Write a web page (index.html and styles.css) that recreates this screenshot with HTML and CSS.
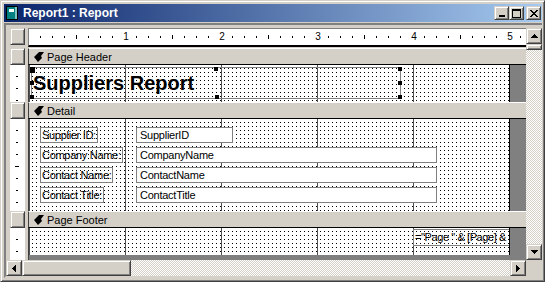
FILE: index.html
```html
<!DOCTYPE html>
<html lang="en">
<head>
    <meta charset="UTF-8">
    <title>Report1 : Report</title>
    <link rel="stylesheet" href="styles.css">
</head>
<body>
<div class="window">
    <div class="titlebar">
        <svg class="app-icon" width="16" height="16" viewBox="0 0 16 16">
            <rect x="1.5" y="1.5" width="11" height="13" fill="#008080" stroke="#000"/>
            <rect x="10" y="2" width="2" height="12" fill="#7fc4c4"/>
            <rect x="4" y="4" width="5" height="3" fill="#fff"/>
        </svg>
        <span class="title">Report1 : Report</span>
        <div class="caption-buttons">
            <div class="cap-btn raised">
                <svg width="8" height="8" viewBox="0 0 8 8" shape-rendering="crispEdges"><rect x="1" y="6" width="6" height="2"/></svg>
            </div>
            <div class="cap-btn raised">
                <svg width="9" height="9" viewBox="0 0 9 9" shape-rendering="crispEdges"><path d="M0 0h9v9H0zM1 2v6h7V2z" fill-rule="evenodd"/></svg>
            </div>
            <div class="cap-btn raised close">
                <svg width="8" height="7" viewBox="0 0 8 7" shape-rendering="crispEdges"><path d="M0 0h2v1h1v1h2V1h1V0h2v1H7v1H6v1H5v1h1v1h1v1h1v1H6V6H5V5H3v1H2v1H0V6h1V5h1V4h1V3H2V2H1V1H0z"/></svg>
            </div>
        </div>
    </div>

    <div class="client">
        <div class="pane">
            <div class="design">
                <!-- vodorovne pravitko -->
                <div class="row ruler-row">
                    <div class="corner-box raised"></div>
                    <div class="ruler">
                        <div class="inch"><span>1</span></div>
                        <div class="inch"><span>2</span></div>
                        <div class="inch"><span>3</span></div>
                        <div class="inch"><span>4</span></div>
                        <div class="inch"><span>5</span></div>
                    </div>
                </div>

                <!-- Page Header -->
                <div class="row bar-row">
                    <div class="selector raised"></div>
                    <div class="band bar">
                        <svg class="bar-icon" width="10" height="10" viewBox="0 0 10 10"><path d="M0 5L5 0H10L7 4L8 6L4 10Z"/></svg>
                        Page Header
                    </div>
                </div>
                <div class="row sec-header">
                    <div class="vruler"></div>
                    <div class="band section">
                        <div class="canvas canvas-header">
                            <div class="title-label">
                                Suppliers Report
                                <span class="handle h-tl"></span>
                                <span class="handle h-tm"></span>
                                <span class="handle h-tr"></span>
                                <span class="handle h-ml"></span>
                                <span class="handle h-mr"></span>
                                <span class="handle h-bl"></span>
                                <span class="handle h-bm"></span>
                                <span class="handle h-br"></span>
                            </div>
                        </div>
                        <div class="offpage"></div>
                    </div>
                </div>

                <!-- Detail -->
                <div class="row bar-row">
                    <div class="selector raised"></div>
                    <div class="band bar">
                        <svg class="bar-icon" width="10" height="10" viewBox="0 0 10 10"><path d="M0 5L5 0H10L7 4L8 6L4 10Z"/></svg>
                        Detail
                    </div>
                </div>
                <div class="row sec-detail">
                    <div class="vruler"></div>
                    <div class="band section">
                        <div class="canvas canvas-detail">
                            <div class="field-row">
                                <div class="lbl-cell"><span class="lbl">Supplier ID:</span></div>
                                <div class="txt short">SupplierID</div>
                            </div>
                            <div class="field-row">
                                <div class="lbl-cell"><span class="lbl">Company Name:</span></div>
                                <div class="txt long">CompanyName</div>
                            </div>
                            <div class="field-row">
                                <div class="lbl-cell"><span class="lbl">Contact Name:</span></div>
                                <div class="txt long">ContactName</div>
                            </div>
                            <div class="field-row">
                                <div class="lbl-cell"><span class="lbl">Contact Title:</span></div>
                                <div class="txt long">ContactTitle</div>
                            </div>
                        </div>
                        <div class="offpage"></div>
                    </div>
                </div>

                <!-- Page Footer -->
                <div class="row bar-row">
                    <div class="selector raised"></div>
                    <div class="band bar">
                        <svg class="bar-icon" width="10" height="10" viewBox="0 0 10 10"><path d="M0 5L5 0H10L7 4L8 6L4 10Z"/></svg>
                        Page Footer
                    </div>
                </div>
                <div class="row sec-footer">
                    <div class="vruler"></div>
                    <div class="band section">
                        <div class="canvas canvas-footer">
                            <div class="txt page-no">="Page " &amp; [Page] &amp;</div>
                        </div>
                        <div class="offpage"></div>
                    </div>
                </div>

                <div class="row sec-rest">
                    <div class="vruler"></div>
                    <div class="band offpage"></div>
                </div>
            </div>

            <div class="vscroll">
                <div class="sbtn raised">
                    <svg width="7" height="4" viewBox="0 0 7 4" shape-rendering="crispEdges"><path d="M3 0h1v1h1v1h1v1h1v1H0V3h1V2h1V1h1z"/></svg>
                </div>
                <div class="vthumb raised"></div>
                <div class="track"></div>
                <div class="sbtn raised">
                    <svg width="7" height="4" viewBox="0 0 7 4" shape-rendering="crispEdges"><path d="M0 0h7v1H6v1H5v1H4v1H3V3H2V2H1V1H0z"/></svg>
                </div>
            </div>
        </div>

        <div class="hscroll-row">
            <div class="hscroll">
                <div class="sbtn raised">
                    <svg width="4" height="7" viewBox="0 0 4 7" shape-rendering="crispEdges"><path d="M3 0h1v7H3V6H2V5H1V4H0V3h1V2h1V1h1z"/></svg>
                </div>
                <div class="hthumb raised"></div>
                <div class="track"></div>
                <div class="sbtn raised">
                    <svg width="4" height="7" viewBox="0 0 4 7" shape-rendering="crispEdges"><path d="M0 0h1v1h1v1h1v1h1v1H3v1H2v1H1v1H0z"/></svg>
                </div>
            </div>
            <div class="sizebox"></div>
        </div>
    </div>
</div>
</body>
</html>
```

FILE: styles.css
```css
* {
    box-sizing: border-box;
}
body {
    margin: 0;
    background: #d4d0c8;
    font-family: "Liberation Sans", Arial, sans-serif;
    font-size: 11px;
    color: #000;
}
.window {
    width: 545px;
    height: 282px;
    display: flex;
    flex-direction: column;
    padding: 3px 2px 3px 3px;
    background: #d4d0c8;
    border: 1px solid;
    border-color: #d4d0c8 #404040 #404040 #d4d0c8;
    box-shadow: inset 1px 1px #fff, inset -1px -1px #808080;
    overflow: hidden;
}
.raised {
    background: #d4d0c8;
    border: 1px solid;
    border-color: #d4d0c8 #404040 #404040 #d4d0c8;
    box-shadow: inset 1px 1px #fff, inset -1px -1px #808080;
}

/* titulek okna */
.titlebar {
    flex: none;
    height: 18px;
    display: flex;
    align-items: center;
    padding: 0 1px;
    background: linear-gradient(to right, #0a246a, #a6caf0);
    color: #fff;
}
.app-icon {
    flex: none;
    margin-right: 2px;
}
.title {
    font-weight: bold;
    font-size: 12px;
    white-space: nowrap;
}
.caption-buttons {
    margin-left: auto;
    display: flex;
}
.cap-btn {
    width: 15px;
    height: 14px;
    display: flex;
    align-items: center;
    justify-content: center;
}
.cap-btn.close {
    margin-left: 2px;
}

/* klientska oblast */
.client {
    flex: 1;
    margin-top: 1px;
    border-style: solid;
    border-width: 2px 0 2px 2px;
    border-color: #808080 transparent #d4d0c8 #808080;
    padding-top: 3px;
    display: flex;
    flex-direction: column;
}
.pane {
    height: 232px;
    display: flex;
}
.design {
    width: 520px;
    flex: none;
    padding-left: 4px;
    display: flex;
    flex-direction: column;
}
.row {
    display: flex;
    flex: none;
}

/* pravitka */
.ruler-row {
    height: 19px;
    margin-bottom: 1px;
}
.corner-box {
    width: 15px;
    height: 17px;
    flex: none;
}
.ruler {
    flex: 1;
    margin-left: 3px;
    display: flex;
    border-top: 1px solid #808080;
    border-left: 1px solid #808080;
    border-bottom: 2px solid #000;
    background-color: #fff;
    background-image: repeating-linear-gradient(to right, transparent 0 11px, #000 11px 12px);
    background-size: 100% 2px;
    background-position: 0 7px;
    background-repeat: no-repeat;
}
.inch {
    width: 96px;
    flex: none;
    display: flex;
    justify-content: flex-end;
    align-items: center;
    background: linear-gradient(#000, #000) 47px 6px / 1px 4px no-repeat;
}
.inch span {
    width: 8px;
    margin-right: -5px;
    text-align: center;
    background: #fff;
    color: #000;
    font-size: 10px;
    line-height: 10px;
}
.vruler {
    width: 15px;
    flex: none;
    background-color: #fff;
    background-image: linear-gradient(#000, #000), repeating-linear-gradient(to bottom, transparent 0 11px, #000 11px 12px);
    background-size: 4px 1px, 2px 100%;
    background-position: 5px 47px, 6px 0;
    background-repeat: no-repeat;
}

/* sekce */
.bar-row {
    height: 17px;
}
.selector {
    width: 15px;
    flex: none;
}
.band {
    flex: 1;
    margin-left: 3px;
    border-left: 1px solid #404040;
}
.bar {
    display: flex;
    align-items: center;
    gap: 3px;
    padding-left: 5px;
    background: #d4d0c8;
    border-top: 1px solid #fff;
    border-bottom: 1px solid #000;
    white-space: nowrap;
}
.bar-icon {
    flex: none;
}
.sec-header {
    height: 37px;
}
.sec-detail {
    height: 92px;
}
.sec-footer {
    height: 27px;
}
.sec-rest {
    flex: 1;
}
.section {
    display: flex;
}
.offpage {
    flex: 1;
    background: #808080;
}
.canvas {
    width: 481px;
    flex: none;
    border-right: 1px solid #000;
    background-color: #fff;
    background-image:
        linear-gradient(to right, #505050 1px, transparent 1px),
        linear-gradient(to right, #fff 3px, transparent 3px),
        linear-gradient(to bottom, #fff 3px, #000 3px);
    background-size: 96px 100%, 4px 4px, 4px 4px;
}

/* Page Header */
.canvas-header {
    padding: 2px 0 0 2px;
}
.title-label {
    position: relative;
    width: 370px;
    height: 32px;
    border: 1px solid #808080;
    padding-left: 1px;
    font-size: 20px;
    font-weight: bold;
    line-height: 30px;
    white-space: nowrap;
}
.handle {
    position: absolute;
    width: 4px;
    height: 4px;
    background: #000;
}
.h-tl {
    left: -2px;
    top: -1px;
    width: 5px;
    height: 6px;
}
.h-tm {
    left: 182px;
    top: -1px;
}
.h-tr {
    right: -2px;
    top: -1px;
}
.h-ml {
    left: -2px;
    top: 13px;
}
.h-mr {
    right: -2px;
    top: 13px;
}
.h-bl {
    left: -2px;
    bottom: -1px;
}
.h-bm {
    left: 183px;
    bottom: -1px;
}
.h-br {
    right: -2px;
    bottom: -1px;
}

/* Detail */
.canvas-detail {
    padding-top: 8px;
    display: flex;
    flex-direction: column;
    gap: 4px;
}
.field-row {
    display: flex;
    padding-left: 11px;
    height: 16px;
}
.lbl-cell {
    width: 96px;
    flex: none;
}
.lbl {
    display: inline-block;
    height: 16px;
    padding: 0 1px;
    border: 1px solid #808080;
    line-height: 14px;
    letter-spacing: -0.3px;
    white-space: nowrap;
}
.txt {
    height: 16px;
    padding-left: 3px;
    border: 1px solid #808080;
    background: #fff;
    line-height: 14px;
    letter-spacing: -0.25px;
    white-space: nowrap;
    overflow: hidden;
}
.txt.short {
    width: 97px;
}
.txt.long {
    width: 301px;
}

/* Page Footer */
.canvas-footer {
    display: flex;
    justify-content: flex-end;
    padding-top: 1px;
}
.txt.page-no {
    width: 96px;
    height: 17px;
    padding-left: 1px;
    border-right: none;
    background: transparent;
    letter-spacing: -0.4px;
}

/* posuvniky */
.sbtn {
    width: 16px;
    height: 16px;
    flex: none;
    display: flex;
    align-items: center;
    justify-content: center;
}
.track {
    flex: 1;
    background: repeating-conic-gradient(#fff 0 25%, #d4d0c8 0 50%) 0 0 / 2px 2px;
}
.vscroll {
    width: 16px;
    flex: none;
    display: flex;
    flex-direction: column;
}
.vthumb {
    height: 6px;
    flex: none;
}
.hscroll-row {
    height: 16px;
    display: flex;
}
.hscroll {
    width: 520px;
    flex: none;
    display: flex;
}
.hthumb {
    width: 109px;
    flex: none;
}
.sizebox {
    flex: 1;
    background: #d4d0c8;
}
```
